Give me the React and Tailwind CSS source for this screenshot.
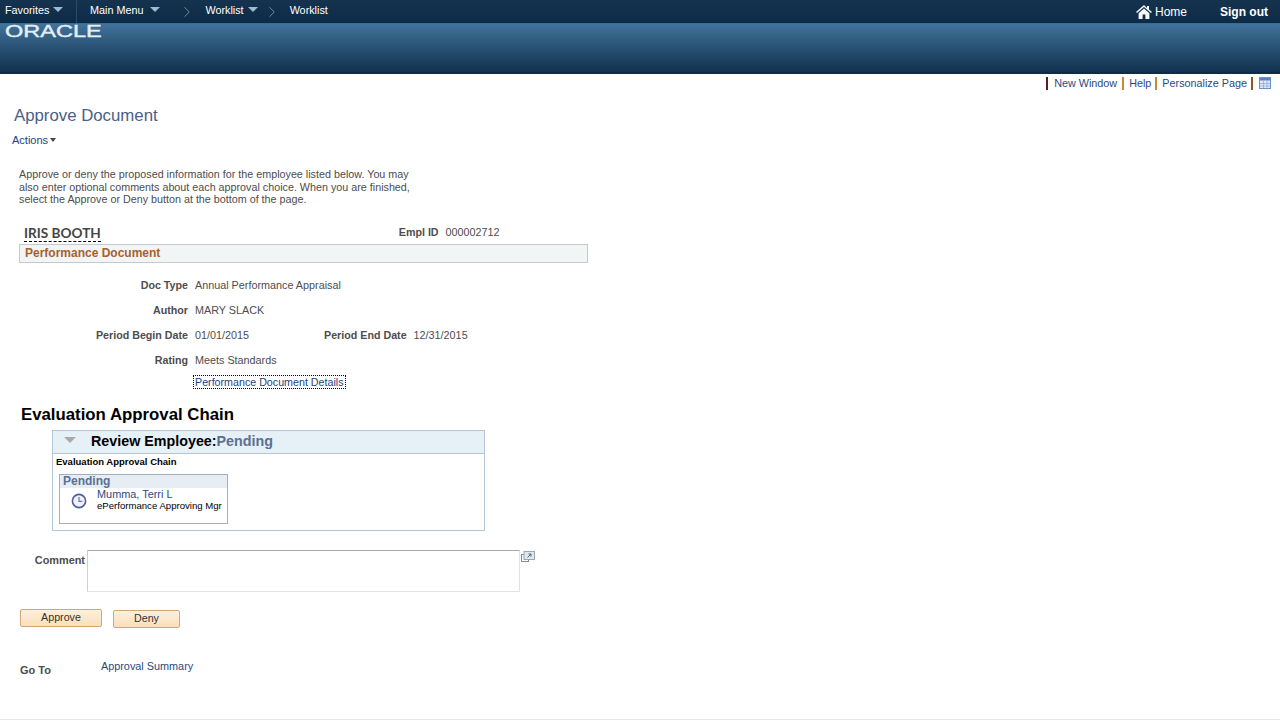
import { ChevronRight } from "lucide-react";

const font = { fontFamily: '"Liberation Sans", Arial, sans-serif' };

function Caret({ className }) {
  return <span className={`inline-block w-0 h-0 border-l-[5px] border-r-[5px] border-t-[5px] border-l-transparent border-r-transparent ${className}`} />;
}

function FieldRow({ label, value, children, className }) {
  return (
    <div className={`flex items-center h-[25px] ${className}`}>
      <div className="w-[188px] text-right font-bold text-[10.7px] text-[#4d4d4d]">{label}</div>
      <div className="ml-[7px] text-[10.8px] text-[#4d4d4d]">{value}</div>
      {children}
    </div>
  );
}

export default function App() {
  return (
    <div className="w-[1280px] h-[720px] overflow-hidden bg-white text-[11px] flex flex-col" style={font}>

      {/* top nav */}
      <div className="h-[24px] flex items-start text-white text-[10.8px] bg-gradient-to-b from-[#15334f] to-[#0d2b47] border-b border-[#3d6a8d]">
        <div className="w-[77px] h-[23px] flex items-start pl-[5px] pt-[2px] border-r border-[#2a4a66]">
          <span>Favorites</span>
          <Caret className="ml-[4px] mt-[5px] border-t-[#9fbbd3]" />
        </div>
        <div className="flex items-start pl-[13px] pt-[2px]">
          <span>Main Menu</span>
          <Caret className="ml-[7px] mt-[5px] border-t-[#9fbbd3]" />
          <ChevronRight className="ml-[18px] mt-[1px] text-[#7d95aa]" size={18} strokeWidth={1.2} />
          <span className="ml-[9px]">Worklist</span>
          <Caret className="ml-[4px] mt-[5px] border-t-[#9fbbd3]" />
          <ChevronRight className="ml-[5px] mt-[1px] text-[#7d95aa]" size={18} strokeWidth={1.2} />
          <span className="ml-[9px]">Worklist</span>
        </div>
        <div className="ml-auto flex items-center pt-[3px] pr-[12px]">
          <svg width="16" height="14" viewBox="0 0 16 14" fill="#f4f6f8">
            <path d="M8 0L0 7l1 1 7-6 7 6 1-1-3-2.6V1h-2v2.1z" />
            <path d="M2.6 8.2L8 3.5l5.4 4.7V14H9.4V9.6H6.6V14H2.6z" />
          </svg>
          <span className="ml-[3px] text-[12px]">Home</span>
          <span className="ml-[33px] text-[12px] font-bold">Sign out</span>
        </div>
      </div>

      {/* banner */}
      <div className="h-[50px] pl-[5px] bg-gradient-to-b from-[#41739b] to-[#12324f] border-b-2 border-[#0f2b45]">
        <div className="text-[#e4edf3] text-[16px] leading-[14px] mt-[1px] origin-left scale-x-[1.47] w-[70px] [-webkit-text-stroke:0.4px_#e4edf3]">ORACLE</div>
      </div>

      {/* pagebar */}
      <div className="h-[18px] flex items-center justify-end pr-[9px] text-[10.8px] text-[#2b4a80]">
        <span className="border-l-2 border-[#5a1f1f] pl-[6px] h-[13px] leading-[13px]">New Window</span>
        <span className="ml-[5px] border-l-2 border-[#c88a2c] pl-[5px] h-[13px] leading-[13px]">Help</span>
        <span className="ml-[4px] border-l-2 border-[#c88a2c] pl-[5px] h-[13px] leading-[13px]">Personalize Page</span>
        <span className="ml-[4px] border-l-2 border-[#8a5a20] h-[13px]" />
        <svg className="ml-[6px]" width="12" height="12" viewBox="0 0 12 12">
          <rect x="0.5" y="0.5" width="11" height="11" fill="#dfe8f7" stroke="#6d8fd0" />
          <rect x="1" y="1" width="10" height="2.5" fill="#5b80c8" />
          <path d="M1 6.5h10M1 9h10M4.5 4v7M8 4v7" stroke="#8fabdd" strokeWidth="0.8" />
        </svg>
      </div>

      <div className="ml-[14px] mt-[14px] text-[16.8px] leading-[20px] text-[#4a6088]">Approve Document</div>
      <div className="ml-[12px] mt-[7px] h-[14px] flex items-center text-[#24437c]">
        Actions
        <span className="ml-[2px] w-0 h-0 border-l-[3.5px] border-r-[3.5px] border-t-[4px] border-l-transparent border-r-transparent border-t-[#444]" />
      </div>

      <p className="ml-[19px] mt-[21px] w-[395px] leading-[12.5px] text-[#4d4d4d] text-[10.75px]">
        Approve or deny the proposed information for the employee listed below. You may also enter optional comments about each approval choice. When you are finished, select the Approve or Deny button at the bottom of the page.
      </p>

      <div className="mt-[17px] ml-[19px] w-[569px]">
        <div className="flex items-end h-[21px] pl-[5px]">
          <span className="text-[13.6px] leading-[15px] font-bold text-[#444] border-b border-dashed border-black mb-[2px]" style={{ fontFamily: "Lato, sans-serif" }}>IRIS BOOTH</span>
          <span className="ml-[298px] font-bold text-[10.7px] text-[#4d4d4d] mb-[3px]">Empl ID</span>
          <span className="ml-[7px] text-[10.8px] text-[#4d4d4d] mb-[3px]">000002712</span>
        </div>
        <div className="h-[19px] bg-[#f2f5f5] border border-[#c4c9c9] pl-[5px] flex items-center text-[12px] font-bold text-[#a8602e]">
          Performance Document
        </div>
      </div>

      <div className="mt-[10px]">
        <FieldRow label="Doc Type" value="Annual Performance Appraisal" />
        <FieldRow label="Author" value="MARY SLACK" />
        <FieldRow label="Period Begin Date" value="01/01/2015">
          <span className="ml-[75px] font-bold text-[10.7px] text-[#4d4d4d]">Period End Date</span>
          <span className="ml-[7px] text-[10.8px] text-[#4d4d4d]">12/31/2015</span>
        </FieldRow>
        <FieldRow label="Rating" value="Meets Standards" />
      </div>

      <div className="ml-[193px] mt-[2px] w-fit h-[14px] leading-[12px] px-px border border-dotted border-black text-[#24437c] text-[10.7px]">
        Performance Document Details
      </div>

      <div className="ml-[21px] mt-[16px] text-[16.8px] leading-[20px] font-bold text-black">Evaluation Approval Chain</div>

      <div className="ml-[52px] mt-[5px] w-[433px] h-[101px] border border-[#b4c6d6]">
        <div className="h-[23px] bg-[#e6f0f7] border-b border-[#b4c6d6] flex items-center">
          <Caret className="ml-[11px] mb-[3px] border-l-[6px] border-r-[6px] border-t-[6px] border-t-[#a9a9a9]" />
          <span className="ml-[15px] text-[14.3px] font-bold text-black">Review Employee:</span>
          <span className="text-[14.3px] font-bold text-[#5a7191]">Pending</span>
        </div>
        <div className="ml-[3px] mt-[1px] h-[13px] leading-[13px] text-[9.5px] font-bold text-black">Evaluation Approval Chain</div>
        <div className="ml-[6px] mt-[6px] w-[169px] h-[50px] border border-[#9fb0c4]">
          <div className="h-[13px] leading-[13px] bg-[#e6edf5] pl-[3px] text-[12px] font-bold text-[#5a7191]">Pending</div>
          <div className="flex">
            <svg className="ml-[11px] mt-[5px]" width="16" height="16" viewBox="0 0 16 16">
              <circle cx="8" cy="8" r="6.6" fill="#eef1fa" stroke="#4f5f9a" strokeWidth="1.6" />
              <path d="M8 4v4.3h3.4" fill="none" stroke="#6b78aa" strokeWidth="1.2" />
            </svg>
            <div className="ml-[10px]">
              <div className="text-[10.9px] leading-[12px] text-[#2b4a80]">Mumma, Terri L</div>
              <div className="text-[9.6px] leading-[11px] text-black">ePerformance Approving Mgr</div>
            </div>
          </div>
        </div>
      </div>

      <div className="mt-[19px] flex items-start">
        <div className="w-[85px] mt-[2px] text-right font-bold text-[10.9px] text-[#4d4d4d]">Comment</div>
        <div className="ml-[2px] w-[433px] h-[42px] border border-[#e2e2e2] border-t-[#a9a9a9] border-l-[#d0d0d0] rounded-[1px]" />
        <svg className="ml-px mt-px" width="14" height="11" viewBox="0 0 14 11">
          <rect x="0.5" y="3.5" width="7" height="7" fill="#fff" stroke="#7f8c99" />
          <rect x="3" y="0.5" width="10.5" height="8" fill="#dfe6ee" stroke="#9aa8b6" />
          <path d="M6.5 6.5L10 3M7.5 3H10V5.5" fill="none" stroke="#51637a" strokeWidth="1" />
        </svg>
      </div>

      <div className="ml-[20px] mt-[17px] flex items-start text-[#333]">
        <div className="w-[82px] h-[18px] leading-[15px] text-center text-[10.7px] rounded-[2px] border border-[#d0a878] bg-gradient-to-b from-[#fdf0de] to-[#fadfb8]">Approve</div>
        <div className="ml-[11px] mt-px w-[67px] h-[18px] leading-[15px] text-center text-[10.7px] rounded-[2px] border border-[#d0a878] bg-gradient-to-b from-[#fdf0de] to-[#fadfb8]">Deny</div>
      </div>

      <div className="ml-[20px] mt-[30px] flex items-start">
        <span className="mt-[4px] font-bold text-[11px] text-[#4d4d4d]">Go To</span>
        <span className="ml-[50px] text-[10.85px] text-[#2b4a80]">Approval Summary</span>
      </div>

      <div className="mt-auto h-px bg-[#e8e8e8]" />
    </div>
  );
}
